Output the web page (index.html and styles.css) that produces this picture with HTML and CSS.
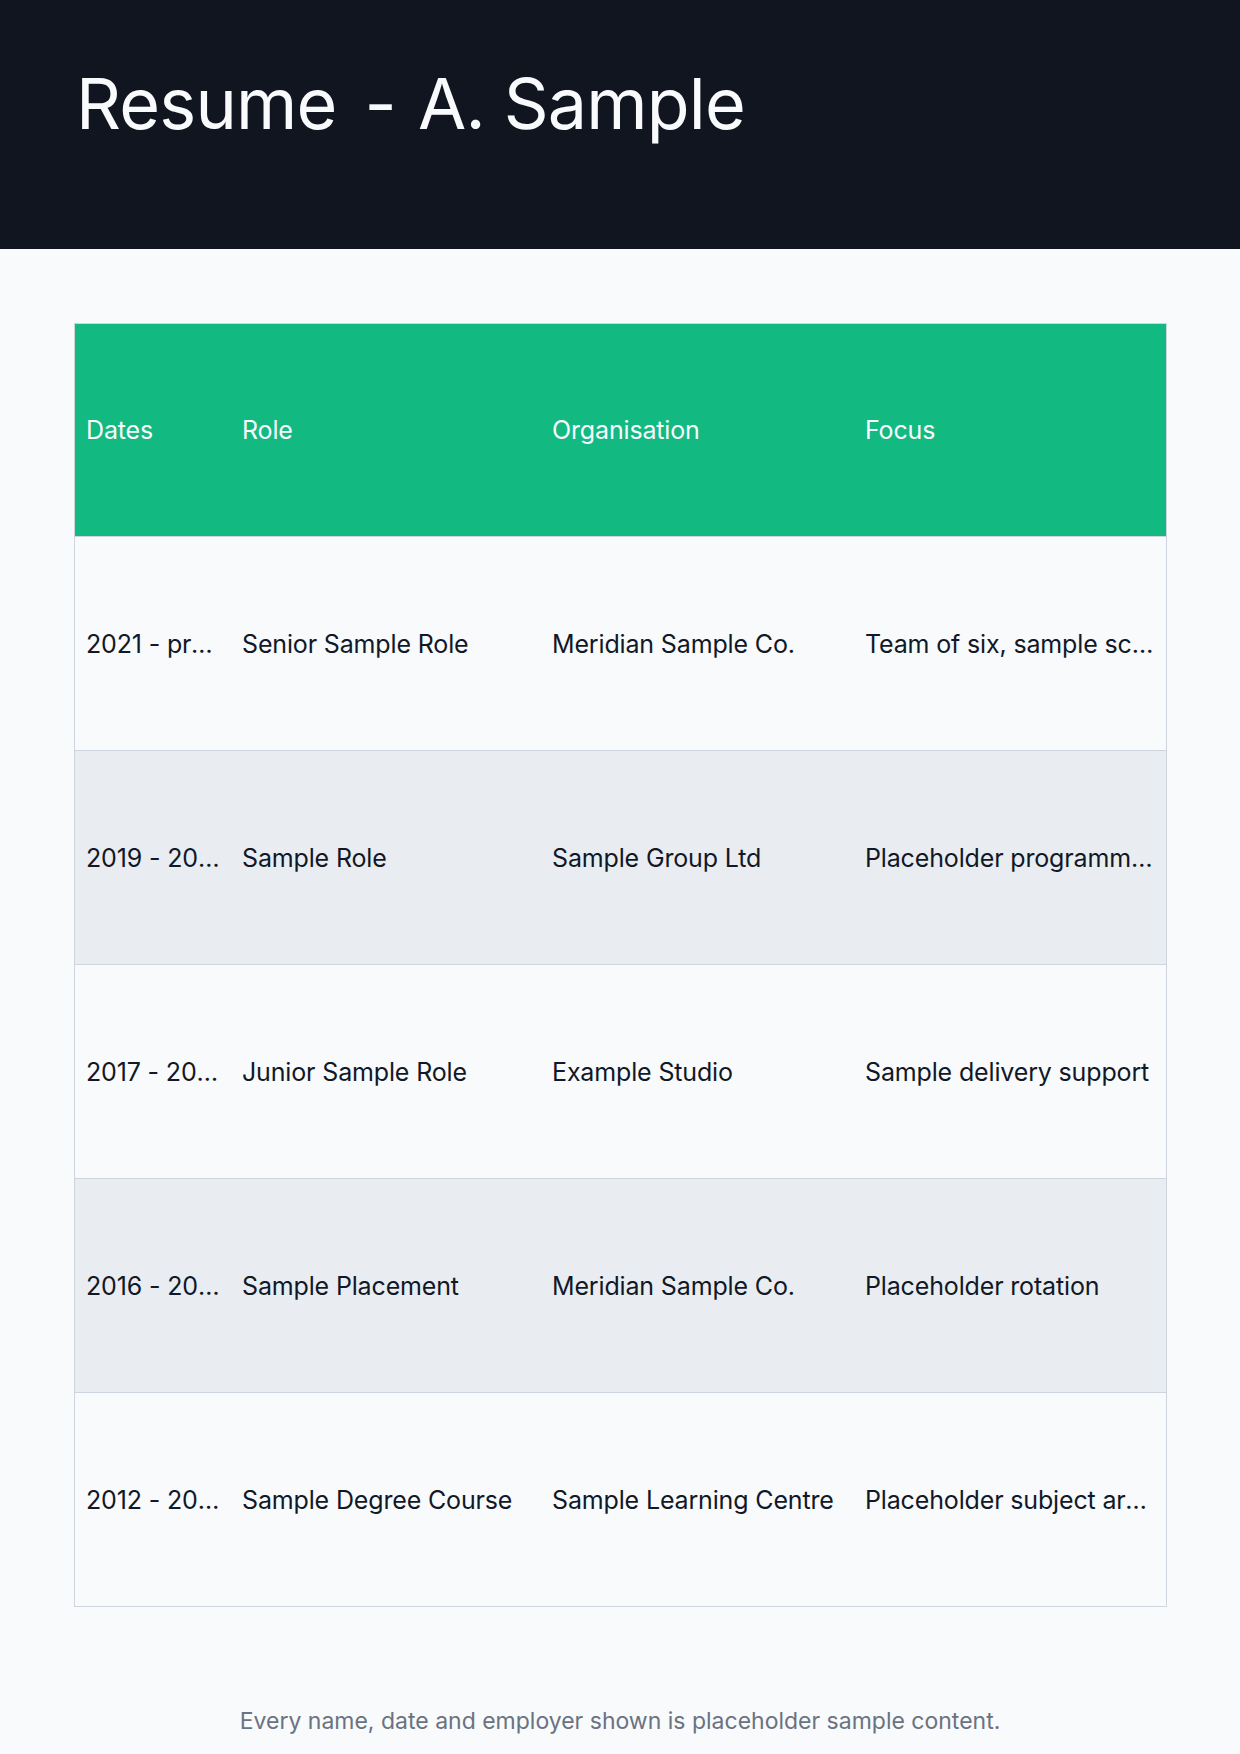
FILE: index.html
```html
<!DOCTYPE html>
<html lang="en">
<head>
<meta charset="utf-8">
<title>Resume - A. Sample</title>
<link rel="stylesheet" href="styles.css">
</head>
<body>
<header class="masthead">
  <h1 class="title">Resume<span class="dash">-</span>A. Sample</h1>
</header>
<main class="content">
  <div class="table" role="table">
    <div class="row head" role="row">
      <div class="cell" role="columnheader">Dates</div>
      <div class="cell" role="columnheader">Role</div>
      <div class="cell" role="columnheader">Organisation</div>
      <div class="cell" role="columnheader">Focus</div>
    </div>
    <div class="row" role="row">
      <div class="cell">2021 - present</div>
      <div class="cell">Senior Sample Role</div>
      <div class="cell">Meridian Sample Co.</div>
      <div class="cell">Team of six, sample scope and budgets</div>
    </div>
    <div class="row alt" role="row">
      <div class="cell">2019 - 2021</div>
      <div class="cell">Sample Role</div>
      <div class="cell">Sample Group Ltd</div>
      <div class="cell">Placeholder programme delivery</div>
    </div>
    <div class="row" role="row">
      <div class="cell">2017 - 2019</div>
      <div class="cell">Junior Sample Role</div>
      <div class="cell">Example Studio</div>
      <div class="cell">Sample delivery support</div>
    </div>
    <div class="row alt" role="row">
      <div class="cell">2016 - 2017</div>
      <div class="cell">Sample Placement</div>
      <div class="cell">Meridian Sample Co.</div>
      <div class="cell">Placeholder rotation</div>
    </div>
    <div class="row" role="row">
      <div class="cell">2012 - 2016</div>
      <div class="cell">Sample Degree Course</div>
      <div class="cell">Sample Learning Centre</div>
      <div class="cell">Placeholder subject areas</div>
    </div>
  </div>
  <p class="note">Every name, date and employer shown is placeholder sample content.</p>
</main>
</body>
</html>
```
FILE: styles.css
```css
* { box-sizing: border-box; }
html, body {
  margin: 0;
  padding: 0;
  background: #f8fafc;
  font-family: Inter, "Liberation Sans", sans-serif;
  color: #111827;
}
.masthead {
  background: #111520;
  height: 249px;
  padding: 54px 0 0 76px;
}
.title {
  margin: 0;
  font-size: 70px;
  font-weight: 400;
  line-height: 100px;
  color: #f8fafc;
  letter-spacing: -0.8px;
}
.dash {
  display: inline-block;
  margin: 0 22px 0 28px;
}
.content {
  padding: 74px 74px 0 74px;
}
.table {
  border: 1px solid #cfd5dc;
  width: 1093px;
}
.row {
  display: grid;
  grid-template-columns: 156px 310px 313px 1fr;
  height: 214px;
  align-items: center;
  background: #f8fafc;
  border-top: 1px solid #cfd5dc;
}
.row.head {
  border-top: none;
  height: 212px;
  background: #12b981;
  color: #f8fafc;
}
.row.alt { background: #e9edf1; }
.cell {
  padding: 0 10px 0 11px;
  font-size: 25px;
  line-height: 32px;
  letter-spacing: -0.15px;
  white-space: nowrap;
  overflow: hidden;
  text-overflow: ellipsis;
}
.note {
  margin: 98px 0 0 0;
  text-align: center;
  font-size: 23px;
  line-height: 32px;
  color: #6b7280;
}
```
